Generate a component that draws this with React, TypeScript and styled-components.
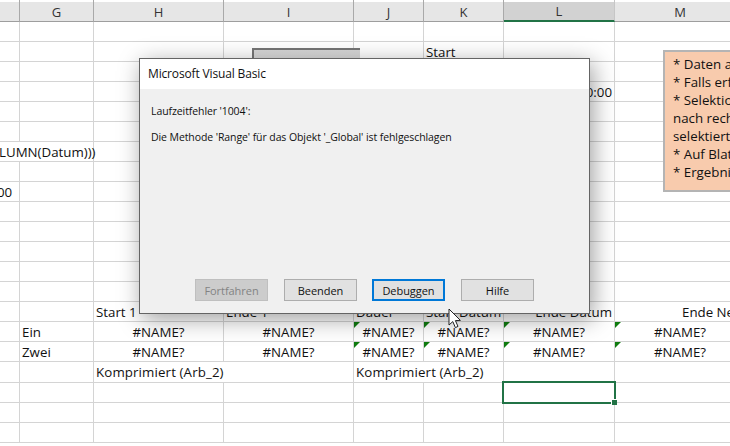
import React from "react";
import styled, { createGlobalStyle } from "styled-components";

const Global = createGlobalStyle`
  html, body { margin: 0; padding: 0; background: #fff; }
  #root { width: 730px; height: 446px; }
`;

const Page = styled.div`
  position: relative;
  width: 730px;
  height: 446px;
  overflow: hidden;
  background: #fff;
  font-family: "Open Sans", "Noto Sans", sans-serif;
  color: #111;
`;

const Sheet = styled.div`
  display: grid;
  grid-template-columns: 20px 74px 130px 130px 70px 80px 111px 131px;
  grid-template-rows: 22px repeat(17, 20px) 21px repeat(3, 20px);
  width: 746px;
`;

const Head = styled.div<{ $active?: boolean }>`
  box-sizing: border-box;
  height: 22px;
  padding-top: 2px;
  background-clip: content-box;
  background-color: ${(p) => (p.$active ? "#d2d2d2" : "#e6e6e6")};
  border-right: 1px solid ${(p) => (p.$active ? "#c6c6c6" : "#a9a9a9")};
  border-bottom: ${(p) => (p.$active ? "2px solid #217346" : "1px solid #9e9e9e")};
  display: flex;
  align-items: center;
  justify-content: center;
  font-size: 13px;
  color: #333;
`;

const Cell = styled.div<{
  $align?: "left" | "center" | "right";
  $span?: number;
  $flag?: boolean;
  $indent?: number;
  $wide?: boolean;
}>`
  position: relative;
  box-sizing: border-box;
  ${(p) => (p.$span ? `grid-column: span ${p.$span};` : "")}
  border-right: 1px solid #d4d4d4;
  border-bottom: 1px solid #d4d4d4;
  font-size: 13.3px;
  line-height: 20px;
  padding: 0 2px;
  ${(p) => (p.$indent !== undefined ? `text-indent: ${p.$indent}px;` : "")}
  ${(p) => (p.$wide ? "letter-spacing: 0.12px;" : "")}
  text-align: ${(p) => p.$align || "left"};
  white-space: nowrap;
  ${(p) =>
    p.$flag
      ? `&::before {
    content: "";
    position: absolute;
    left: 0;
    top: 0;
    border-top: 6px solid #107c10;
    border-right: 6px solid transparent;
  }`
      : ""}
`;

const Shape = styled.div`
  position: absolute;
  left: 252px;
  top: 48px;
  width: 108px;
  height: 30px;
  box-sizing: border-box;
  border-top: 2px solid #767676;
  border-left: 2px solid #767676;
  background: linear-gradient(#d6d6d6, #ececec);
`;

const Note = styled.div`
  position: absolute;
  left: 663px;
  top: 50px;
  width: 120px;
  height: 142px;
  box-sizing: border-box;
  border: 2px solid #b4b4b4;
  background: #f8cbad;
  padding: 3px 0 0 8px;
  font-size: 13.3px;
  line-height: 18px;
  white-space: nowrap;
`;

const Dialog = styled.div`
  position: absolute;
  left: 139px;
  top: 58px;
  width: 451px;
  height: 256px;
  box-sizing: border-box;
  border: 1px solid #646464;
  background: #f0f0f0;
  box-shadow: 3px 5px 22px rgba(0, 0, 0, 0.38);
  display: flex;
  flex-direction: column;
  color: #111;
`;

const TitleBar = styled.div`
  height: 30px;
  background: #fff;
  padding-left: 8px;
  font-size: 12px;
  line-height: 30px;
  letter-spacing: -0.15px;
`;

const Body = styled.div`
  flex: 1;
  padding: 15px 11px 0;
  font-size: 10.5px;
  line-height: 14px;
  letter-spacing: -0.09px;
`;

const Message = styled.p`
  margin: 0 0 12px;
`;

const Buttons = styled.div`
  display: flex;
  gap: 16px;
  padding-left: 55px;
  height: 34px;
`;

const Button = styled.button<{ $kind?: "default" | "disabled" }>`
  box-sizing: border-box;
  width: 73px;
  height: 22px;
  padding: 0;
  font-family: inherit;
  font-size: 11px;
  letter-spacing: -0.05px;
  color: ${(p) => (p.$kind === "disabled" ? "#838383" : "#111")};
  background: ${(p) => (p.$kind === "disabled" ? "#cccccc" : "#e1e1e1")};
  margin-left: ${(p) => (p.$kind === "default" ? "-1px" : "0")};
  border: ${(p) =>
    p.$kind === "default"
      ? "2px solid #0078d7"
      : p.$kind === "disabled"
      ? "1px solid #bfbfbf"
      : "1px solid #adadad"};
`;

const Selection = styled.div`
  position: absolute;
  left: 502px;
  top: 381px;
  width: 114px;
  height: 23px;
  box-sizing: border-box;
  border: 2px solid #217346;
  &::after {
    content: "";
    position: absolute;
    right: -3px;
    bottom: -3px;
    width: 5px;
    height: 5px;
    background: #217346;
    border: 1px solid #fff;
    border-right: none;
    border-bottom: none;
  }
`;

const Cursor = styled.svg`
  position: absolute;
  left: 448px;
  top: 308px;
`;

const heads = ["G", "H", "I", "J", "K", "L", "M"];

type C = { t?: string; a?: "left" | "center" | "right"; span?: number; flag?: boolean; indent?: number; wide?: boolean };

const blank = (): C[] => [{}, {}, {}, {}, {}, {}, {}, {}];

const rows: C[][] = Array.from({ length: 21 }, blank);
rows[1][5] = { t: "Start" };
rows[3][6] = { t: "0:00", a: "right" };
rows[6] = [{ t: "LUMN(Datum)))", span: 2, indent: -3 }, {}, {}, {}, {}, {}, {}];
rows[8][0] = { t: "00", indent: -5 };
rows[14] = [
  {},
  {},
  { t: "Start 1" },
  { t: "Ende 1" },
  { t: "Dauer" },
  { t: "Start Datum", a: "center" },
  { t: "Ende Datum", a: "right" },
  { t: "Ende Neu", indent: 65 },
];
const nm = (flag: boolean): C => ({ t: "#NAME?", a: "center", flag });
rows[15] = [{}, { t: "Ein" }, nm(false), nm(false), nm(true), nm(true), nm(true), nm(true)];
rows[16] = [{}, { t: "Zwei" }, nm(false), nm(false), nm(true), nm(true), nm(true), nm(true)];
rows[17] = [
  {},
  {},
  { t: "Komprimiert (Arb_2)", span: 2, wide: true },
  { t: "Komprimiert (Arb_2)", span: 2, wide: true },
  {},
  {},
];

export default function App() {
  return (
    <Page>
      <Global />
      <Sheet>
        <Head />
        {heads.map((h) => (
          <Head key={h} $active={h === "L"}>
            {h}
          </Head>
        ))}
        {rows.map((r, i) =>
          r.map((c, j) => (
            <Cell key={`${i}-${j}`} $align={c.a} $span={c.span} $flag={c.flag} $indent={c.indent} $wide={c.wide}>
              {c.t}
            </Cell>
          ))
        )}
      </Sheet>
      <Shape />
      <Note>
        * Daten auswählen
        <br />* Falls erforderlich
        <br />* Selektion
        <br />
        nach rechts
        <br />
        selektiert
        <br />* Auf Blatt
        <br />* Ergebnis
      </Note>
      <Selection />
      <Dialog>
        <TitleBar>Microsoft Visual Basic</TitleBar>
        <Body>
          <Message>Laufzeitfehler '1004':</Message>
          <Message>Die Methode 'Range' für das Objekt '_Global' ist fehlgeschlagen</Message>
        </Body>
        <Buttons>
          <Button $kind="disabled">Fortfahren</Button>
          <Button>Beenden</Button>
          <Button $kind="default">Debuggen</Button>
          <Button>Hilfe</Button>
        </Buttons>
      </Dialog>
      <Cursor width="14" height="22" viewBox="0 0 14 22">
        <path d="M1 1 L1 17 L4.8 13.6 L7.4 19.6 L10 18.4 L7.4 12.6 L12.4 12.4 Z" fill="#fff" stroke="#222" strokeWidth="1" />
      </Cursor>
    </Page>
  );
}
